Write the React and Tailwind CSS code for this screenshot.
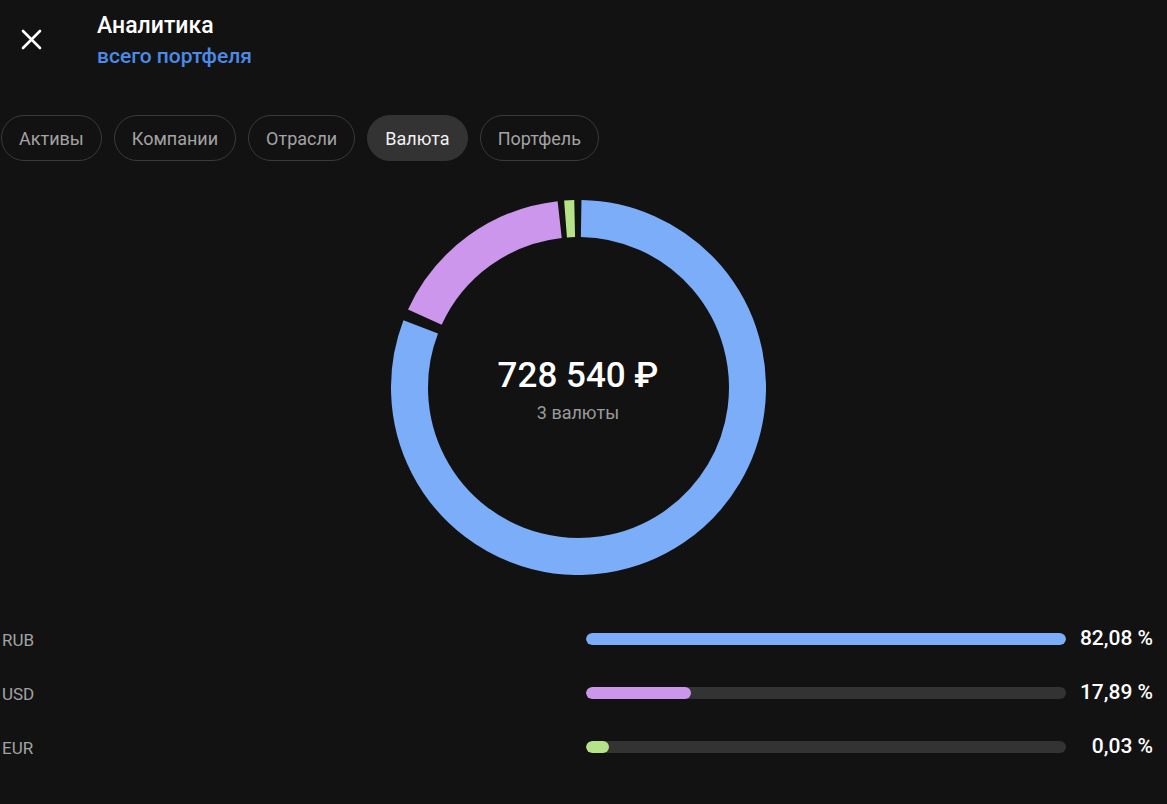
import React from 'react';

// tabs + currency data
const tabs = ['Активы', 'Компании', 'Отрасли', 'Валюта', 'Портфель'];

const currencies = [
    { code: 'RUB', value: 82.08, label: '82,08 %', color: 'bg-[#7cadf9]' },
    { code: 'USD', value: 17.89, label: '17,89 %', color: 'bg-[#cc96ec]' },
    { code: 'EUR', value: 0.03, label: '0,03 %', color: 'bg-[#b5e389]' },
];

// donut arc helper (degrees clockwise from top)
const C = 187.5;
const R = 169;
const point = (deg) => {
    const a = (deg * Math.PI) / 180;
    return [C + R * Math.sin(a), C - R * Math.cos(a)];
};
const arc = (from, to) => {
    const [x1, y1] = point(from);
    const [x2, y2] = point(to);
    const large = to - from > 180 ? 1 : 0;
    return `M ${x1} ${y1} A ${R} ${R} 0 ${large} 1 ${x2} ${y2}`;
};

const Donut = () => (
    <div className="relative w-[375px] h-[375px]">
        <svg width="375" height="375" viewBox="0 0 375 375">
            <path d={arc(0.9, 291)} fill="none" stroke="#7cadf9" strokeWidth="37" />
            <path d={arc(294.6, 353.6)} fill="none" stroke="#cc96ec" strokeWidth="37" />
            <path d={arc(355.6, 358.7)} fill="none" stroke="#b5e389" strokeWidth="37" />
        </svg>
        <div className="absolute inset-0 flex flex-col items-center justify-center pt-[5px]">
            <p className="text-[35px] leading-[41px] font-medium text-white">728 540 ₽</p>
            <p className="mt-[5px] text-[18px] leading-[24px] text-[#9a9a9a]">3 валюты</p>
        </div>
    </div>
);

const App = () => {
    const max = Math.max(...currencies.map((c) => c.value));

    return (
        <div className="min-h-screen bg-[#121212] font-[Roboto,sans-serif]">
            {/* header */}
            <div className="flex">
                <div className="w-[97px] pl-[21px] pt-[29px]">
                    <svg width="21" height="21" viewBox="0 0 21 21">
                        <path d="M2 2 L19 19 M19 2 L2 19" stroke="#ffffff" strokeWidth="2.6" strokeLinecap="round" />
                    </svg>
                </div>
                <div className="pt-[12px]">
                    <h1 className="text-[23px] leading-[27px] font-medium text-white">Аналитика</h1>
                    <p className="mt-[5px] text-[21px] leading-[25px] font-medium text-[#4c8ae6]">всего портфеля</p>
                </div>
            </div>

            {/* tabs */}
            <div className="mt-[46px] flex gap-[12px] pl-[1px]">
                {tabs.map((t) => (
                    <button
                        key={t}
                        className={
                            t === 'Валюта'
                                ? 'h-[46px] px-[17px] rounded-full border-[1.5px] border-[#333333] bg-[#333333] text-[18px] text-[#f2f2f2]'
                                : 'h-[46px] px-[17px] rounded-full border-[1.5px] border-[#3a3a3a] text-[18px] text-[#a3a3a3]'
                        }
                    >
                        {t}
                    </button>
                ))}
            </div>

            {/* donut */}
            <div className="mt-[39px] flex justify-center pr-[11px]">
                <Donut />
            </div>

            {/* bars */}
            <div className="mt-[37px] pl-[2px] pr-[14px]">
                {currencies.map((c) => (
                    <div key={c.code} className="h-[54px] flex items-center">
                        <span className="flex-1 pt-[3px] text-[17px] text-[#a3a3a3]">{c.code}</span>
                        <div className="w-[480px] h-[12px] rounded-full bg-[#333333] overflow-hidden">
                            <div
                                className={`h-full min-w-[23px] rounded-full ${c.color}`}
                                style={{ width: `${(c.value / max) * 100}%` }}
                            />
                        </div>
                        <span className="w-[87px] text-right text-[21px] font-medium text-white">{c.label}</span>
                    </div>
                ))}
            </div>
        </div>
    );
};

export default App;
